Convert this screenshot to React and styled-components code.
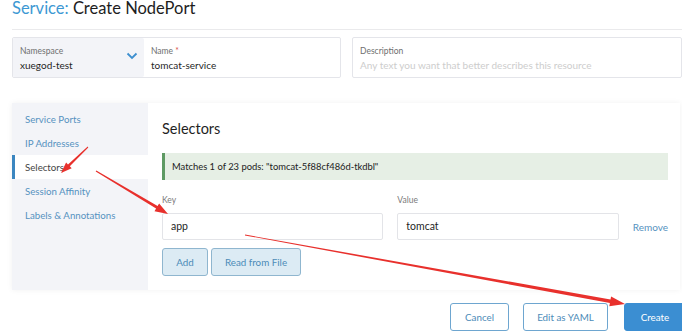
import React from 'react';
import styled, { createGlobalStyle } from 'styled-components';

const GlobalStyle = createGlobalStyle`
  html, body {
    margin: 0;
    padding: 0;
    background: #fff;
    overflow: hidden;
  }
  body {
    font-family: Lato, "Open Sans", sans-serif;
    color: #222;
  }
`;

const Page = styled.div`
  position: relative;
  width: 682px;
  height: 331px;
  padding-left: 12px;
  box-sizing: border-box;
  display: flex;
  flex-direction: column;
`;

const Title = styled.h1`
  margin: 0;
  font-size: 16.5px;
  line-height: 16px;
  font-weight: 400;
  color: #1d1d1d;
  span {
    color: #3d98d3;
  }
`;

const Divider = styled.hr`
  margin: 13px 0 0;
  border: 0;
  border-top: 1px solid #eaeaec;
`;

const FieldRow = styled.div`
  display: flex;
  margin-top: 7px;
  height: 41px;
  gap: 11px;
`;

const Joined = styled.div`
  display: flex;
  border: 1px solid #e4e5ea;
  border-radius: 2px;
  box-sizing: border-box;
`;

const Field = styled.div`
  position: relative;
  box-sizing: border-box;
  width: ${({ w }) => (w ? `${w}px` : 'auto')};
  flex: ${({ w }) => (w ? 'none' : 1)};
  padding: 8px 7px;
  background: ${({ tint }) => (tint ? '#f3f4f8' : '#fff')};
  border: ${({ boxed }) => (boxed ? '1px solid #e4e5ea' : 'none')};
  border-radius: 2px;
  display: flex;
  flex-direction: column;
`;

const Label = styled.div`
  font-size: 8.5px;
  line-height: 11px;
  color: #6f6f6f;
  b {
    color: #d9534f;
    font-weight: 400;
  }
`;

const Value = styled.div`
  font-size: 10px;
  line-height: 15px;
  margin-top: 1px;
  color: ${({ placeholder }) => (placeholder ? '#cdcdcd' : '#1f1f1f')};
`;

const Chevron = styled.svg`
  position: absolute;
  right: 6px;
  top: 14px;
`;

const Panel = styled.div`
  margin-top: 25px;
  width: 668px;
  height: 187px;
  display: flex;
  box-shadow: 0 0 6px rgba(0, 0, 0, 0.06);
`;

const Side = styled.ul`
  list-style: none;
  margin: 0;
  padding: 4px 0 0;
  width: 136px;
  background: #f3f4f8;
`;

const SideItem = styled.li`
  height: 24px;
  line-height: 24px;
  padding-left: 10px;
  font-size: 9.7px;
  color: ${({ active }) => (active ? '#444' : '#5592c0')};
  background: ${({ active }) => (active ? '#fff' : 'transparent')};
  border-left: 3px solid ${({ active }) => (active ? '#3b86c0' : 'transparent')};
`;

const Content = styled.div`
  flex: 1;
  background: #fff;
  padding: 16px 12px 14px 14px;
`;

const Heading = styled.h2`
  margin: 0;
  font-size: 14.5px;
  line-height: 20px;
  font-weight: 400;
  color: #1f1f1f;
`;

const Banner = styled.div`
  margin-top: 14px;
  height: 27px;
  line-height: 27px;
  padding-left: 7px;
  background: #e6efe5;
  border-left: 3px solid #5e9a63;
  font-size: 9.4px;
  color: #222;
`;

const Grid = styled.div`
  display: grid;
  grid-template-columns: 1fr 1fr auto;
  column-gap: 14px;
  margin-top: 15px;
  align-items: center;
`;

const SmallLabel = styled.div`
  font-size: 8.5px;
  line-height: 11px;
  color: #7a7a7a;
  margin-bottom: 7px;
`;

const Input = styled.div`
  height: 27px;
  box-sizing: border-box;
  border: 1px solid #e3e4e8;
  border-radius: 2px;
  padding-left: 8px;
  line-height: 25px;
  font-size: 10.5px;
  color: #1f1f1f;
`;

const Link = styled.span`
  font-size: 10px;
  color: #5592c0;
`;

const ButtonRow = styled.div`
  display: flex;
  gap: ${({ gap }) => gap || 3}px;
  margin-top: ${({ top }) => top || 0}px;
  justify-content: ${({ end }) => (end ? 'flex-end' : 'flex-start')};
  margin-right: ${({ end }) => (end ? '-4px' : '0')};
`;

const Button = styled.button`
  height: 28px;
  box-sizing: border-box;
  width: ${({ w }) => w}px;
  padding: 0;
  font-family: inherit;
  font-size: 9.8px;
  border-radius: 3px;
  cursor: pointer;
  ${({ kind }) =>
    kind === 'primary'
      ? 'background:#3b8ed2;border:1px solid #3b8ed2;color:#fff;'
      : kind === 'soft'
      ? 'background:#dcebf4;border:1px solid #8fb6cf;color:#4c8bb8;'
      : 'background:#fff;border:1px solid #6ea6d0;color:#4c8bb8;'}
`;

const Overlay = styled.svg`
  position: absolute;
  left: 0;
  top: 0;
  pointer-events: none;
`;

const arrow = (sx, sy, tx, ty, w0, w1, len, head) => {
  const dx = tx - sx;
  const dy = ty - sy;
  const d = Math.hypot(dx, dy);
  const ux = dx / d;
  const uy = dy / d;
  const nx = -uy;
  const ny = ux;
  const bx = tx - ux * len;
  const by = ty - uy * len;
  const p = [
    [sx + (nx * w0) / 2, sy + (ny * w0) / 2],
    [bx + (nx * w1) / 2, by + (ny * w1) / 2],
    [bx + (nx * head) / 2, by + (ny * head) / 2],
    [tx, ty],
    [bx - (nx * head) / 2, by - (ny * head) / 2],
    [bx - (nx * w1) / 2, by - (ny * w1) / 2],
    [sx - (nx * w0) / 2, sy - (ny * w0) / 2],
  ];
  return p.map((q) => q.map((v) => v.toFixed(1)).join(',')).join(' ');
};

const sideItems = ['Service Ports', 'IP Addresses', 'Selectors', 'Session Affinity', 'Labels & Annotations'];

const App = () => {
  return (
    <>
      <GlobalStyle />
      <Page>
        <Title>
          <span>Service:</span> Create NodePort
        </Title>
        <Divider />
        <FieldRow>
          <Joined>
            <Field w={131} tint>
              <Label>Namespace</Label>
              <Value>xuegod-test</Value>
              <Chevron width="12" height="8" viewBox="0 0 12 8">
                <polyline points="1.5,1.5 6,6 10.5,1.5" fill="none" stroke="#3d8fcf" strokeWidth="1.8" />
              </Chevron>
            </Field>
            <Field w={196}>
              <Label>
                Name <b>*</b>
              </Label>
              <Value>tomcat-service</Value>
            </Field>
          </Joined>
          <Field boxed>
            <Label>Description</Label>
            <Value placeholder>Any text you want that better describes this resource</Value>
          </Field>
        </FieldRow>

        <Panel>
          <Side>
            {sideItems.map((item) => (
              <SideItem key={item} active={item === 'Selectors'}>
                {item}
              </SideItem>
            ))}
          </Side>
          <Content>
            <Heading>Selectors</Heading>
            <Banner>Matches 1 of 23 pods: "tomcat-5f88cf486d-tkdbl"</Banner>
            <Grid>
              <SmallLabel>Key</SmallLabel>
              <SmallLabel>Value</SmallLabel>
              <span />
              <Input>app</Input>
              <Input>tomcat</Input>
              <Link>Remove</Link>
            </Grid>
            <ButtonRow top={8}>
              <Button kind="soft" w={46}>Add</Button>
              <Button kind="soft" w={90}>Read from File</Button>
            </ButtonRow>
          </Content>
        </Panel>

        <ButtonRow end gap={14} top={13}>
          <Button w={59}>Cancel</Button>
          <Button w={85}>Edit as YAML</Button>
          <Button kind="primary" w={62} style={{ marginLeft: 2 }}>Create</Button>
        </ButtonRow>

        <Overlay width="682" height="331" viewBox="0 0 682 331">
          <g fill="#e8302c">
            <polygon points={arrow(88, 147, 61, 173, 1, 2.6, 11, 8)} />
            <polygon points={arrow(96, 171, 168, 214, 1, 3, 13, 9)} />
            <polygon points={arrow(245, 235, 625, 304, 0.8, 3.4, 15, 10)} />
          </g>
        </Overlay>
      </Page>
    </>
  );
};

export default App;
